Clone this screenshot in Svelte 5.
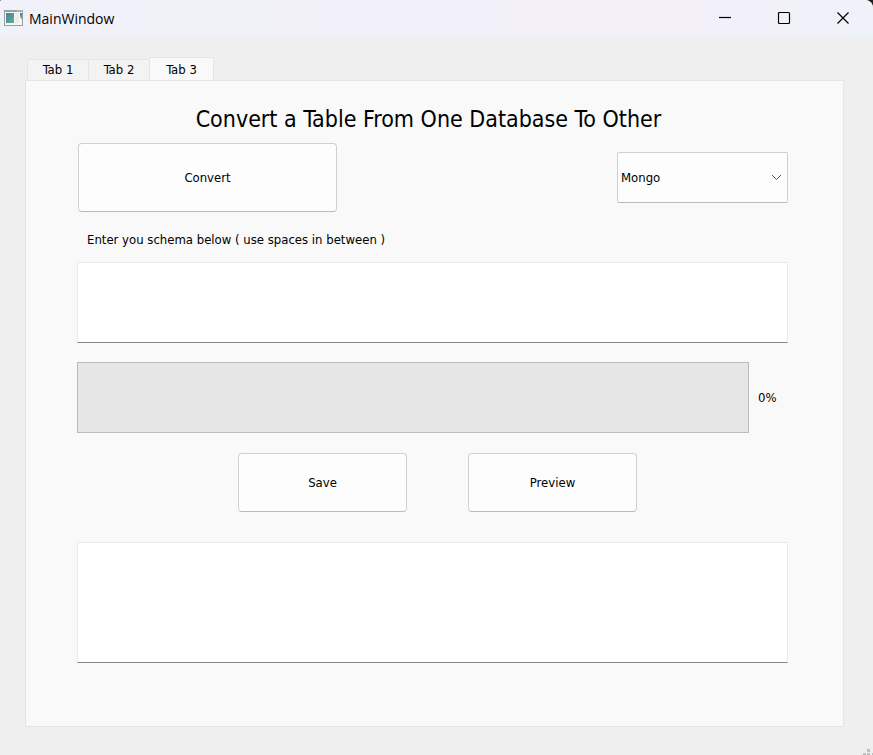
<script>
  const tabs = ['Tab 1', 'Tab 2', 'Tab 3'];
  let active = $state(2);
  let target = $state('Mongo');
  let schema = $state('');
  let output = $state('');
  let progress = $state(0);
</script>

<div class="window">
  <header class="titlebar">
    <svg class="app-icon" width="20" height="17" viewBox="0 0 20 17" aria-hidden="true">
      <defs>
        <linearGradient id="pane" x1="0" y1="0" x2="1" y2="1">
          <stop offset="0" stop-color="#4a7ba6" />
          <stop offset="1" stop-color="#5cb487" />
        </linearGradient>
        <linearGradient id="strip" x1="0" y1="0" x2="0" y2="1">
          <stop offset="0" stop-color="#3f72b8" />
          <stop offset="1" stop-color="#7cc47f" />
        </linearGradient>
      </defs>
      <rect x="0.5" y="0.5" width="18" height="15" fill="#f7f7f7" stroke="#9a9fa3" />
      <path d="M0 1h19" stroke="#9a9fa3" stroke-width="2" />
      <path d="M13 1h1M15 1h1M17 1h1" stroke="#d9dde0" />
      <rect x="2" y="3" width="8" height="10" fill="url(#pane)" />
      <rect x="11" y="3" width="4" height="10" fill="#ececec" />
      <path d="M16 3h2v6h-1l-1-3z" fill="url(#strip)" />
    </svg>
    <span class="caption">MainWindow</span>
    <div class="controls">
      <button aria-label="Minimize">
        <svg width="14" height="14" viewBox="0 0 14 14"><path d="M1 6.5h12" /></svg>
      </button>
      <button aria-label="Maximize">
        <svg width="14" height="14" viewBox="0 0 14 14"><rect x="1.5" y="1.5" width="11" height="11" rx="1" /></svg>
      </button>
      <button aria-label="Close">
        <svg width="14" height="14" viewBox="0 0 14 14"><path d="M1.5 1.5l11 11M12.5 1.5l-11 11" /></svg>
      </button>
    </div>
  </header>

  <main>
    <div class="tabs" role="tablist">
      {#each tabs as tab, i}
        <button role="tab" aria-selected={active === i} class:active={active === i} onclick={() => (active = i)}>{tab}</button>
      {/each}
    </div>

    <section class="panel" role="tabpanel">
      <h1>Convert a Table From One Database To Other</h1>
      <div class="row">
        <button class="push convert">Convert</button>
        <div class="combo">
          <select aria-label="Target database" bind:value={target}>
            <option>Mongo</option>
          </select>
          <svg width="11" height="7" viewBox="0 0 11 7" aria-hidden="true"><path d="M1 1l4.5 4.5L10 1" /></svg>
        </div>
      </div>
      <label for="schema">Enter you schema below ( use spaces in between )</label>
      <textarea id="schema" class="schema" bind:value={schema}></textarea>
      <div class="progress">
        <div class="bar" role="progressbar" aria-label="Conversion progress" aria-valuenow={progress} aria-valuemin="0" aria-valuemax="100">
          <div class="fill" style="width: {progress}%"></div>
        </div>
        <span>{progress}%</span>
      </div>
      <div class="actions">
        <button class="push">Save</button>
        <button class="push">Preview</button>
      </div>
      <textarea class="output" aria-label="Preview output" bind:value={output}></textarea>
    </section>
  </main>

  <svg class="grip" width="10" height="6" viewBox="0 0 10 6" aria-hidden="true">
    <path d="M4 0h3v3h-3zM0 4h3v2h-3zM4 4h3v2h-3zM9 4h1v2h-1z" />
  </svg>
</div>

<style>
  :global(body) {
    margin: 0;
    background: #202020;
  }

  * {
    box-sizing: border-box;
  }

  .window {
    position: relative;
    display: flex;
    flex-direction: column;
    min-height: 100vh;
    overflow: hidden;
    border-radius: 2px 8px 0 0;
    background: #efefef;
    color: #000;
    font-family: Tahoma, 'DejaVu Sans Condensed', 'DejaVu Sans', sans-serif;
    font-size: 13px;
    line-height: 16px;
  }

  button,
  select,
  textarea {
    margin: 0;
    color: inherit;
    font: inherit;
  }

  .titlebar {
    display: flex;
    align-items: center;
    height: 37px;
    padding: 0 1px 0 4px;
    background: linear-gradient(90deg, #f0f2f9, #f3f0f8 60%, #f3f0f8 80%, #eff2f8);
  }

  .caption {
    flex: 1;
    margin-left: 5px;
    font-family: 'Open Sans', 'Noto Sans', sans-serif;
    font-size: 14px;
    line-height: 20px;
  }

  .controls {
    display: flex;
    align-self: flex-start;
    height: 36px;
  }

  .controls button {
    display: flex;
    align-items: center;
    justify-content: center;
    width: 59px;
    padding: 0;
    border: 0;
    background: none;
  }

  .controls svg {
    fill: none;
    stroke: #000;
    stroke-width: 1.2;
  }

  main {
    display: flex;
    flex: 1;
    flex-direction: column;
    padding: 20px 29px 28px 25px;
  }

  .tabs {
    display: flex;
    align-items: flex-end;
    height: 24px;
    margin-bottom: -1px;
    padding-left: 2px;
  }

  .tabs button {
    width: 61px;
    height: 22px;
    padding: 0;
    border: 1px solid #e5e5e5;
    border-right: 0;
    background: #f3f3f3;
  }

  .tabs button.active {
    width: 65px;
    height: 24px;
    border-right: 1px solid #e5e5e5;
    border-bottom: 0;
    background: #f9f9f9;
  }

  .panel {
    display: flex;
    flex: 1;
    flex-direction: column;
    padding: 22px 55px 20px 51px;
    border: 1px solid #e5e5e5;
    background: #f9f9f9;
  }

  h1 {
    margin: 0;
    padding-right: 8px;
    font-size: 23px;
    font-weight: 400;
    line-height: 32px;
    text-align: center;
  }

  .row {
    display: flex;
    align-items: center;
    justify-content: space-between;
    margin-top: 8px;
    padding-left: 1px;
  }

  .push {
    width: 169px;
    height: 59px;
    padding: 0;
    border: 1px solid #d0d0d0;
    border-bottom-color: #bababa;
    border-radius: 4px;
    background: #fdfdfd;
  }

  .push.convert {
    width: 259px;
    height: 69px;
  }

  .combo {
    position: relative;
    width: 171px;
    height: 51px;
  }

  select {
    width: 100%;
    height: 100%;
    padding: 0 24px 0 3px;
    border: 1px solid #d0d0d0;
    border-bottom-color: #bababa;
    border-radius: 2px;
    background: #fdfdfd;
    appearance: none;
  }

  .combo svg {
    position: absolute;
    top: 22px;
    right: 6px;
    fill: none;
    stroke: #555;
    pointer-events: none;
  }

  label {
    margin-top: 20px;
    padding-left: 10px;
  }

  textarea {
    display: block;
    width: 100%;
    padding: 4px;
    border: 1px solid #ebebeb;
    border-bottom-color: #868686;
    border-radius: 1px;
    outline: none;
    background: #fff;
    resize: none;
  }

  .schema {
    height: 81px;
    margin-top: 14px;
  }

  .progress {
    display: flex;
    align-items: center;
    gap: 9px;
    margin-top: 19px;
  }

  .progress span {
    width: 30px;
  }

  .bar {
    flex: 1;
    height: 71px;
    border: 1px solid #bcbcbc;
    background: #e6e6e6;
  }

  .fill {
    height: 100%;
    background: #26a0da;
  }

  .actions {
    display: flex;
    justify-content: center;
    gap: 61px;
    margin-top: 20px;
    padding-left: 10px;
  }

  .output {
    height: 121px;
    margin-top: 30px;
  }

  .grip {
    position: absolute;
    right: 0;
    bottom: 0;
    fill: #bfbfbf;
  }
</style>
